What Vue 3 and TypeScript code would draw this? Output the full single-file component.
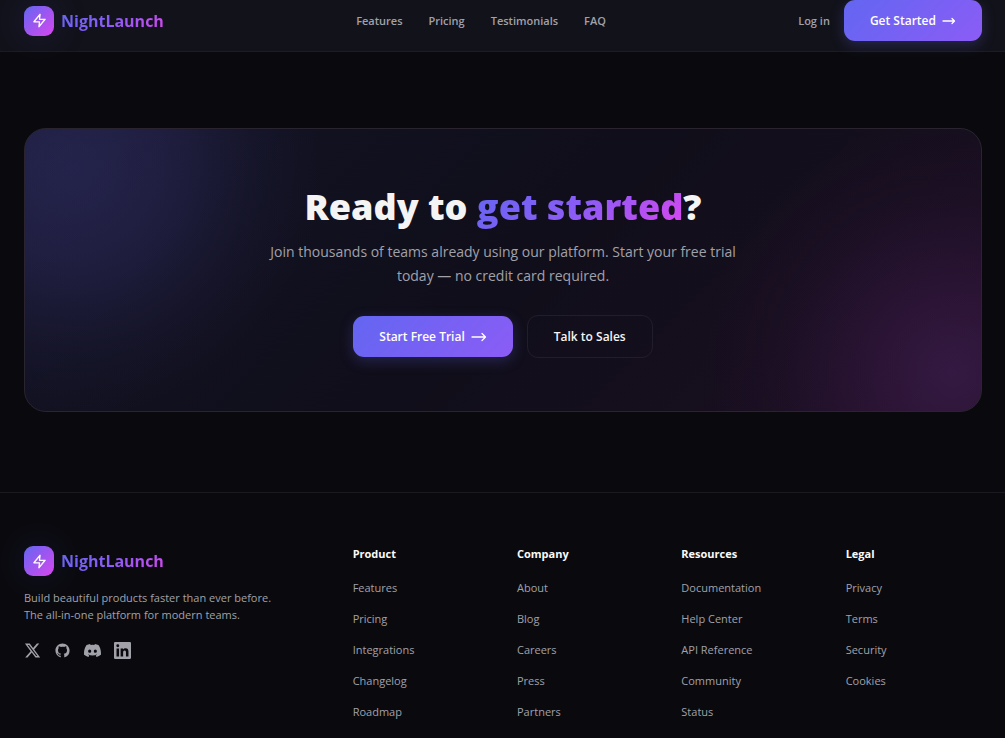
<script setup lang="ts">
interface LinkGroup {
  title: string
  links: string[]
}

interface SocialLink {
  name: string
  path: string
}

const navLinks: string[] = ['Features', 'Pricing', 'Testimonials', 'FAQ']

const groups: LinkGroup[] = [
  { title: 'Product', links: ['Features', 'Pricing', 'Integrations', 'Changelog', 'Roadmap'] },
  { title: 'Company', links: ['About', 'Blog', 'Careers', 'Press', 'Partners'] },
  { title: 'Resources', links: ['Documentation', 'Help Center', 'API Reference', 'Community', 'Status'] },
  { title: 'Legal', links: ['Privacy', 'Terms', 'Security', 'Cookies'] },
]

const socials: SocialLink[] = [
  {
    name: 'X',
    path: 'M18.244 2.25h3.308l-7.227 8.26 8.502 11.24H16.17l-5.214-6.817L4.99 21.75H1.68l7.73-8.835L1.254 2.25H8.08l4.713 6.231zm-1.161 17.52h1.833L7.084 4.126H5.117z',
  },
  {
    name: 'GitHub',
    path: 'M12 2C6.477 2 2 6.484 2 12.017c0 4.425 2.865 8.18 6.839 9.504.5.092.682-.217.682-.483 0-.237-.008-.868-.013-1.703-2.782.605-3.369-1.343-3.369-1.343-.454-1.158-1.11-1.466-1.11-1.466-.908-.62.069-.608.069-.608 1.003.07 1.531 1.032 1.531 1.032.892 1.53 2.341 1.088 2.91.832.092-.647.35-1.088.636-1.338-2.22-.253-4.555-1.113-4.555-4.951 0-1.093.39-1.988 1.029-2.688-.103-.253-.446-1.272.098-2.65 0 0 .84-.27 2.75 1.026A9.564 9.564 0 0112 6.844c.85.004 1.705.115 2.504.337 1.909-1.296 2.747-1.027 2.747-1.027.546 1.379.202 2.398.1 2.651.64.7 1.028 1.595 1.028 2.688 0 3.848-2.339 4.695-4.566 4.943.359.309.678.92.678 1.855 0 1.338-.012 2.419-.012 2.747 0 .268.18.58.688.482A10.019 10.019 0 0022 12.017C22 6.484 17.522 2 12 2z',
  },
  {
    name: 'Discord',
    path: 'M20.317 4.37a19.791 19.791 0 0 0-4.885-1.515.074.074 0 0 0-.079.037c-.21.375-.444.864-.608 1.25a18.27 18.27 0 0 0-5.487 0 12.64 12.64 0 0 0-.617-1.25.077.077 0 0 0-.079-.037A19.736 19.736 0 0 0 3.677 4.37a.07.07 0 0 0-.032.027C.533 9.046-.32 13.58.099 18.057a.082.082 0 0 0 .031.057 19.9 19.9 0 0 0 5.993 3.03.078.078 0 0 0 .084-.028c.462-.63.874-1.295 1.226-1.994a.076.076 0 0 0-.041-.106 13.107 13.107 0 0 1-1.872-.892.077.077 0 0 1-.008-.128c.126-.094.252-.192.372-.292a.074.074 0 0 1 .077-.01c3.928 1.793 8.18 1.793 12.062 0a.074.074 0 0 1 .078.01c.12.098.246.198.373.292a.077.077 0 0 1-.006.127 12.299 12.299 0 0 1-1.873.892.077.077 0 0 0-.041.107c.36.698.772 1.362 1.225 1.993a.076.076 0 0 0 .084.028 19.839 19.839 0 0 0 6.002-3.03.077.077 0 0 0 .032-.054c.5-5.177-.838-9.674-3.549-13.66a.061.061 0 0 0-.031-.03zM8.02 15.33c-1.183 0-2.157-1.085-2.157-2.419 0-1.333.956-2.419 2.157-2.419 1.21 0 2.176 1.096 2.157 2.42 0 1.333-.956 2.418-2.157 2.418zm7.975 0c-1.183 0-2.157-1.085-2.157-2.419 0-1.333.955-2.419 2.157-2.419 1.21 0 2.176 1.096 2.157 2.42 0 1.333-.946 2.418-2.157 2.418z',
  },
  {
    name: 'LinkedIn',
    path: 'M20.447 20.452h-3.554v-5.569c0-1.328-.027-3.037-1.852-3.037-1.853 0-2.136 1.445-2.136 2.939v5.667H9.351V9h3.414v1.561h.046c.477-.9 1.637-1.85 3.37-1.85 3.601 0 4.267 2.37 4.267 5.455v6.286zM5.337 7.433a2.062 2.062 0 0 1-2.063-2.065 2.064 2.064 0 1 1 2.063 2.065zm1.782 13.019H3.555V9h3.564v11.452zM22.225 0H1.771C.792 0 0 .774 0 1.729v20.542C0 23.227.792 24 1.771 24h20.451C23.2 24 24 23.227 24 22.271V1.729C24 .774 23.2 0 22.222 0h.003z',
  },
]
</script>

<template>
  <div class="page">
    <header class="topbar">
      <a class="brand" href="#">
        <span class="mark">
          <svg viewBox="0 0 24 24" aria-hidden="true"><polygon points="13 2 3 14 12 14 11 22 21 10 12 10 13 2" /></svg>
        </span>
        <span class="wordmark">NightLaunch</span>
      </a>
      <nav class="nav" aria-label="Main">
        <a v-for="link in navLinks" :key="link" href="#">{{ link }}</a>
      </nav>
      <div class="account">
        <a class="login" href="#">Log in</a>
        <button class="btn primary" type="button">
          Get Started
          <svg class="arrow" viewBox="0 0 14 10" aria-hidden="true"><path d="M1 5h11M10 2.5l2.5 2.5L10 7.5" /></svg>
        </button>
      </div>
    </header>

    <main class="main">
      <section class="cta">
        <h2>Ready to <span class="accent">get started</span>?</h2>
        <p>Join thousands of teams already using our platform. Start your free trial today — no credit card required.</p>
        <div class="actions">
          <button class="btn primary" type="button">
            Start Free Trial
            <svg class="arrow wide" viewBox="0 0 16 10" aria-hidden="true"><path d="M1 5h13M11 1.5L14.5 5 11 8.5" /></svg>
          </button>
          <button class="btn outline" type="button">Talk to Sales</button>
        </div>
      </section>
    </main>

    <footer class="footer">
      <div class="about">
        <a class="brand" href="#">
          <span class="mark">
            <svg viewBox="0 0 24 24" aria-hidden="true"><polygon points="13 2 3 14 12 14 11 22 21 10 12 10 13 2" /></svg>
          </span>
          <span class="wordmark">NightLaunch</span>
        </a>
        <p>Build beautiful products faster than ever before. The all-in-one platform for modern teams.</p>
        <div class="socials">
          <a v-for="social in socials" :key="social.name" href="#" :aria-label="social.name">
            <svg viewBox="0 0 24 24" aria-hidden="true"><path :d="social.path" /></svg>
          </a>
        </div>
      </div>
      <nav v-for="group in groups" :key="group.title" class="group" :aria-label="group.title">
        <h3>{{ group.title }}</h3>
        <ul>
          <li v-for="link in group.links" :key="link"><a href="#">{{ link }}</a></li>
        </ul>
      </nav>
    </footer>
  </div>
</template>

<style>
body {
  background: #0a0a0e;
}
</style>

<style scoped>
.page {
  min-height: 100vh;
  background: #0a0a0e;
  color: #a1a1aa;
  font-family: "Segoe UI", "Open Sans", "Noto Sans", sans-serif;
  font-size: 11px;
  line-height: 20px;
}

a {
  color: inherit;
  text-decoration: none;
}

h2,
h3,
p,
ul {
  margin: 0;
  padding: 0;
}

.topbar {
  display: flex;
  align-items: center;
  justify-content: space-between;
  padding: 0 23px 10px 24px;
  background: #12121a;
  border-bottom: 1px solid #1c1c23;
}

.brand {
  display: inline-flex;
  align-items: center;
  gap: 7px;
}

.mark {
  display: flex;
  align-items: center;
  justify-content: center;
  width: 30px;
  height: 30px;
  border-radius: 9px;
  background: linear-gradient(135deg, #6366f1, #d946ef);
  box-shadow: 0 0 36px rgba(99, 102, 241, 0.18);
}

.mark svg {
  width: 15px;
  height: 15px;
  fill: none;
  stroke: #fff;
  stroke-width: 2;
  stroke-linecap: round;
  stroke-linejoin: round;
}

.wordmark,
.accent {
  background: linear-gradient(135deg, #6366f1, #8b5cf6 50%, #d946ef);
  -webkit-background-clip: text;
  background-clip: text;
  color: transparent;
}

.wordmark {
  font-size: 16px;
  font-weight: 700;
  line-height: 26px;
}

.nav {
  display: flex;
  gap: 26px;
  font-weight: 600;
}

.account {
  display: flex;
  align-items: center;
  gap: 14px;
}

.login {
  font-weight: 600;
}

.btn {
  display: inline-flex;
  align-items: center;
  justify-content: center;
  gap: 6px;
  padding: 11px 26px;
  border: 0;
  border-radius: 11px;
  font-family: inherit;
  font-size: 12px;
  font-weight: 600;
  line-height: 19px;
  color: #fff;
  cursor: pointer;
}

.primary {
  background: linear-gradient(135deg, #6366f1, #8b5cf6);
  box-shadow: 0 4px 14px rgba(99, 102, 241, 0.25);
}

.outline {
  border: 1px solid #211d2a;
  background: transparent;
  color: #f4f4f5;
}

.arrow {
  width: 14px;
  height: 10px;
  fill: none;
  stroke: currentColor;
  stroke-width: 1.3;
  stroke-linecap: round;
  stroke-linejoin: round;
}

.arrow.wide {
  width: 16px;
}

.main {
  padding: 76px 23px 80px 24px;
}

.cta {
  display: flex;
  flex-direction: column;
  align-items: center;
  padding: 52px 24px 53px;
  border: 1px solid #29242f;
  border-radius: 22px;
  background:
    radial-gradient(circle at 5% 14%, rgba(70, 65, 150, 0.34), rgba(70, 65, 150, 0.26) 90px, rgba(70, 65, 150, 0.08) 180px, transparent 250px),
    radial-gradient(circle at 97% 86%, rgba(130, 55, 165, 0.25), rgba(130, 45, 155, 0.17) 80px, rgba(130, 40, 150, 0.05) 170px, transparent 250px),
    linear-gradient(135deg, #131426, #100e1a 50%, #1b0f21);
  text-align: center;
}

.cta h2 {
  font-size: 36px;
  font-weight: 800;
  line-height: 52px;
  color: #f4f4f5;
}

.cta p {
  max-width: 500px;
  margin-top: 7px;
  font-size: 14px;
  line-height: 24px;
}

.actions {
  display: flex;
  align-items: center;
  gap: 14px;
  margin-top: 27px;
}

.footer {
  display: grid;
  grid-template-columns: repeat(6, minmax(0, 1fr));
  column-gap: 28px;
  padding: 53px 23px 14px 24px;
  border-top: 1px solid #1a1a20;
}

.about {
  grid-column: span 2;
}

.about p {
  max-width: 260px;
  margin-top: 13px;
  line-height: 17px;
}

.socials {
  display: flex;
  gap: 13px;
  margin-top: 19px;
}

.socials a {
  display: flex;
}

.socials svg {
  width: 17px;
  height: 17px;
  fill: currentColor;
}

.group h3 {
  font-size: 11px;
  font-weight: 700;
  line-height: 16px;
  color: #fafafa;
}

.group ul {
  display: flex;
  flex-direction: column;
  gap: 11px;
  margin-top: 16px;
  list-style: none;
}
</style>
